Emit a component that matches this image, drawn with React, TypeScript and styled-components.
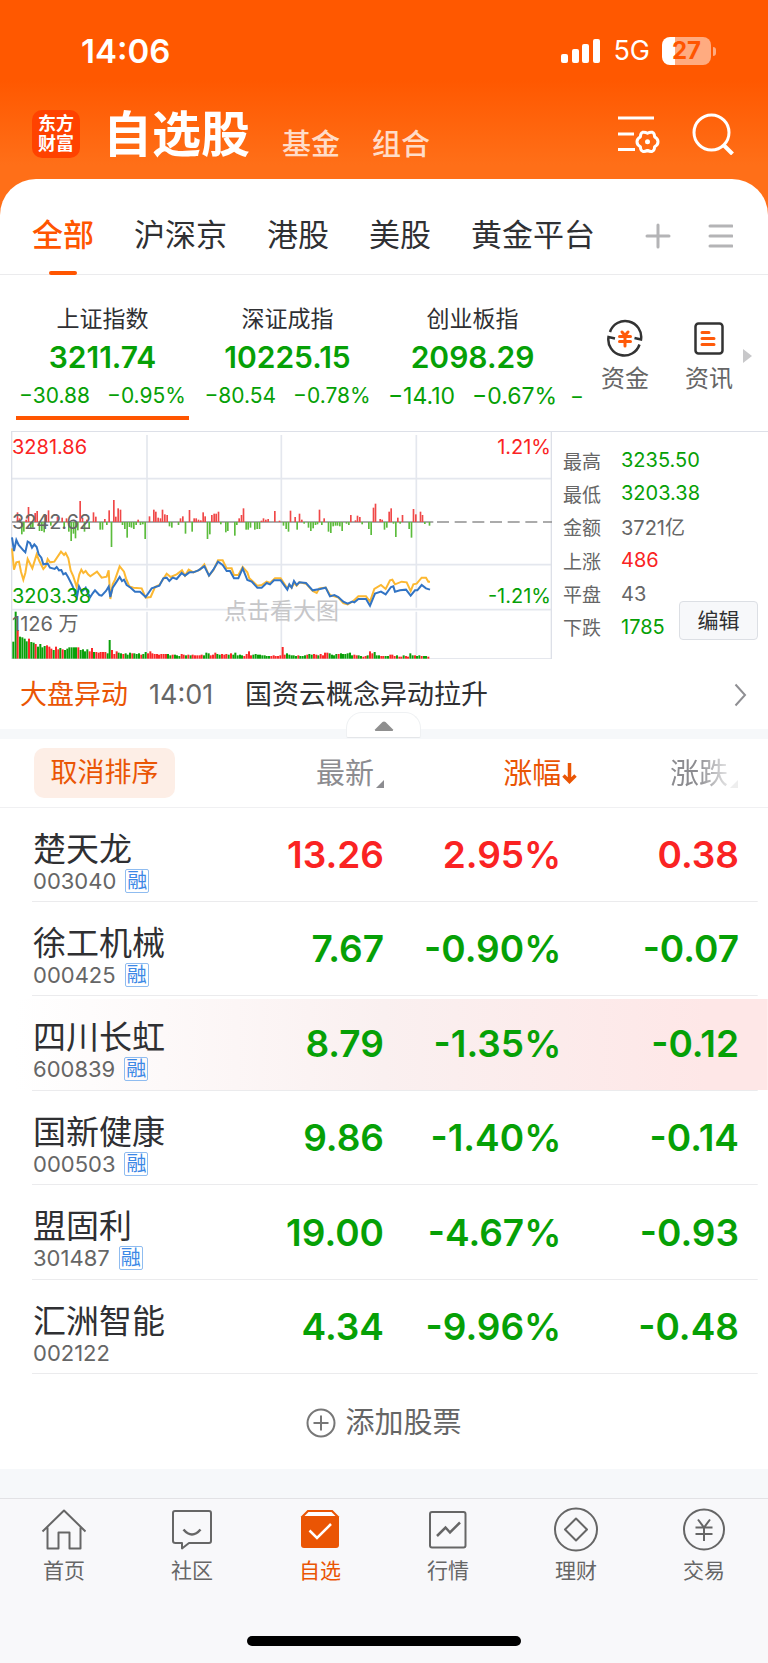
import React from "react";
import styled, { createGlobalStyle, css } from "styled-components";

const ORANGE = "#ff5500";
const DEEP = "#ea5504";
const GREEN = "#06a006";
const RED = "#fa2323";
const GREY = "#666666";
const INK = "#2f3033";
const LINE = "#ebebed";
const BAND = "#f6f8fa";

const Global = createGlobalStyle`
  *, *::before, *::after { box-sizing: border-box; }
  body {
    margin: 0;
    font-family: Inter, "Noto Sans CJK SC", sans-serif;
    color: ${INK};
    background: #f8f8fa;
  }
  button {
    font: inherit;
    color: inherit;
    background: none;
    border: 0;
    padding: 0;
    margin: 0;
    cursor: pointer;
  }
  a { color: inherit; text-decoration: none; }
  svg { display: block; flex: none; }
  h1, p, ul, dl, dd { margin: 0; padding: 0; }
  ul { list-style: none; }
`;

const Page = styled.div`
  min-height: 100vh;
  display: flex;
  flex-direction: column;
  background: linear-gradient(#ff5800 80px, #ff6f18 165px) top / 100% 240px no-repeat;
`;

/* ---------- status bar ---------- */

const StatusBar = styled.div`
  height: 102px;
  padding: 0 52px 0 81px;
  display: flex;
  align-items: center;
  justify-content: space-between;
  color: #fff;
`;

const Clock = styled.time`
  font-size: 33px;
  line-height: 40px;
  font-weight: 600;
`;

const StatusRight = styled.div`
  display: flex;
  align-items: center;
`;

const Network = styled.span`
  margin: 0 12px;
  font-size: 27px;
  line-height: 32px;
`;

const Battery = styled.span`
  width: 49px;
  height: 28px;
  border-radius: 8px;
  background: linear-gradient(90deg, #fff 13px, #ffab80 13px);
  color: ${ORANGE};
  font-size: 24px;
  line-height: 28px;
  font-weight: 700;
  text-align: center;
`;

const BatteryNub = styled.span`
  width: 3px;
  height: 9px;
  margin-left: 2px;
  border-radius: 0 3px 3px 0;
  background: #ffab80;
`;

/* ---------- title bar ---------- */

const TitleBar = styled.header`
  height: 77px;
  padding: 8px 34px 0 32px;
  display: flex;
  align-items: flex-start;
`;

const Logo = styled.span`
  width: 48px;
  height: 48px;
  padding: 4px 0;
  border-radius: 10px;
  background: #ff4200;
  color: #fff;
  font-size: 18px;
  line-height: 20px;
  font-weight: 700;
  text-align: center;
`;

const TitleTabs = styled.nav`
  flex: 1;
  height: 50px;
  margin-left: 23px;
  display: flex;
  align-items: flex-end;
  gap: 32px;
`;

const Title = styled.h1`
  font-size: 49px;
  line-height: 50px;
  font-weight: 600;
  color: #fff;
`;

const TitleTab = styled.button`
  font-size: 29px;
  line-height: 30px;
  font-weight: 500;
  color: #ffdcc8;
`;

const TitleActions = styled.div`
  display: flex;
  gap: 32px;
  height: 48px;
  align-items: center;
`;

/* ---------- card and group tabs ---------- */

const Card = styled.main`
  flex: 1;
  display: flex;
  flex-direction: column;
  background: #fff;
  border-radius: 36px 36px 0 0;
`;

const GroupTabs = styled.nav`
  height: 96px;
  padding: 0 35px 0 32px;
  display: flex;
  align-items: stretch;
  gap: 40px;
  border-bottom: 1px solid ${LINE};
`;

const GroupTab = styled.button<{ $active?: boolean }>`
  position: relative;
  padding-top: 17px;
  font-size: 31px;
  line-height: 40px;
  white-space: nowrap;
  ${(p) =>
    p.$active &&
    css`
      color: ${ORANGE};
      font-weight: 500;
      &::after {
        content: "";
        position: absolute;
        left: 50%;
        bottom: -1px;
        width: 28px;
        height: 4px;
        margin-left: -14px;
        border-radius: 2px;
        background: ${ORANGE};
      }
    `}
`;

const GroupTools = styled.div`
  margin-left: auto;
  padding-top: 18px;
  display: flex;
  align-items: center;
  gap: 36px;
`;

/* ---------- index strip ---------- */

const IndexStrip = styled.section`
  display: flex;
  height: 156px;
  padding-left: 10px;
`;

const IndexList = styled.ul`
  flex: 1;
  min-width: 0;
  display: flex;
  overflow: hidden;
`;

const IndexItem = styled.li<{ $active?: boolean }>`
  flex: 0 0 185px;
  height: 145px;
  padding-top: 30px;
  text-align: center;
  white-space: nowrap;
  background: ${(p) =>
    p.$active ? `linear-gradient(${ORANGE}, ${ORANGE}) center bottom / 173px 4px no-repeat` : "none"};
`;

const IndexName = styled.div`
  font-size: 23px;
  line-height: 28px;
`;

const IndexValue = styled.div`
  margin-top: 5px;
  font-size: 30px;
  line-height: 38px;
  font-weight: 600;
  color: ${GREEN};
`;

const IndexChange = styled.div<{ $large?: boolean }>`
  margin-top: 4px;
  display: flex;
  justify-content: center;
  gap: 17px;
  font-size: ${(p) => (p.$large ? 23 : 21)}px;
  line-height: 32px;
  color: ${GREEN};
`;

const NextChange = styled.li`
  flex: none;
  padding: 105px 0 0 5px;
  font-size: 21px;
  line-height: 32px;
  color: ${GREEN};
`;

const Shortcuts = styled.div`
  flex: none;
  padding: 44px 16px 0 16px;
  display: flex;
  align-items: flex-start;
  gap: 36px;
`;

const Shortcut = styled.a`
  display: flex;
  flex-direction: column;
  align-items: center;
  gap: 6px;
  font-size: 24px;
  line-height: 32px;
  color: ${GREY};
`;

const MoreArrow = styled.span`
  margin: 30px 0 0 -26px;
  border: 7px solid transparent;
  border-left: 9px solid #c8c8ca;
  border-right: 0;
`;

/* ---------- chart and statistics ---------- */

const Market = styled.section`
  margin-left: 11px;
  display: grid;
  grid-template-columns: 541fr 216fr;
  border-top: 1px solid #dde0e8;
`;

const ChartBox = styled.div`
  position: relative;
  height: 227px;
  & > svg { width: 100%; height: 100%; }
`;

const ChartLabel = styled.span<{ $top: number; $side?: "left" | "right"; $color?: string }>`
  position: absolute;
  top: ${(p) => p.$top}px;
  ${(p) => (p.$side === "right" ? "right: 1px;" : "left: 1px;")}
  font-size: 20px;
  line-height: 24px;
  color: ${(p) => p.$color || GREY};
`;

const Watermark = styled.span`
  position: absolute;
  left: 0;
  right: 0;
  top: 163px;
  text-align: center;
  font-size: 23px;
  line-height: 32px;
  color: #c6c6c8;
`;

const Stats = styled.div`
  position: relative;
  padding: 12px 0 0 11px;
`;

const StatList = styled.dl`
  height: 199px;
  display: flex;
  flex-direction: column;
  justify-content: space-between;
`;

const StatRow = styled.div`
  display: flex;
  align-items: center;
  height: 32px;
  font-size: 19px;
  color: ${GREY};
`;

const StatTerm = styled.dt`
  width: 58px;
`;

const StatValue = styled.dd<{ $color?: string }>`
  font-size: 20px;
  color: ${(p) => p.$color || GREY};
`;

const EditButton = styled.button`
  position: absolute;
  right: 10px;
  bottom: 19px;
  width: 79px;
  height: 39px;
  border: 1px solid #dcdfe4;
  border-radius: 4px;
  background: #f7f8fa;
  font-size: 21px;
  line-height: 32px;
`;

/* ---------- news line ---------- */

const News = styled.a`
  height: 70px;
  padding: 2px 21px 0 20px;
  display: flex;
  align-items: center;
  font-size: 27px;
  line-height: 40px;
`;

const NewsTag = styled.span`
  color: ${DEEP};
`;

const NewsTime = styled.time`
  width: 97px;
  padding-left: 21px;
  margin-right: 20px;
  color: ${GREY};
`;

const NewsText = styled.span`
  flex: 1;
`;

const Band = styled.div`
  position: relative;
  height: 10px;
  background: ${BAND};
`;

const Collapse = styled.button`
  position: absolute;
  left: 50%;
  bottom: 1px;
  width: 75px;
  height: 26px;
  margin-left: -38px;
  border: 1px solid #eff1f3;
  border-bottom-color: #e4e6e9;
  border-radius: 16px 16px 2px 2px;
  background: #fff;
  display: flex;
  align-items: center;
  justify-content: center;
  padding-top: 1px;
`;

/* ---------- stock table ---------- */

const Table = styled.table`
  width: 100%;
  border-collapse: collapse;
  table-layout: fixed;
`;

const Column = styled.col<{ $share: number }>`
  width: ${(p) => p.$share}%;
`;

const HeadRow = styled.tr`
  height: 68px;
  border-bottom: 1px solid #f0f0f2;
`;

const HeadCell = styled.th<{ $first?: boolean }>`
  padding: ${(p) => (p.$first ? "0 0 0 34px" : "2px 0 0")};
  text-align: ${(p) => (p.$first ? "left" : "right")};
  font-weight: 400;
`;

const CancelSort = styled.button`
  width: 141px;
  height: 50px;
  padding-top: 1px;
  border-radius: 10px;
  background: #fdeee6;
  color: ${DEEP};
  font-size: 27px;
  line-height: 40px;
`;

const SortButton = styled.button<{ $tone?: "active" | "fade"; $inset?: number }>`
  display: inline-flex;
  align-items: center;
  gap: ${(p) => (p.$tone === "active" ? 1 : 2)}px;
  margin-right: ${(p) => p.$inset || 0}px;
  font-size: 29px;
  line-height: 40px;
  color: ${(p) => (p.$tone === "active" ? DEEP : "#8c8c90")};
  ${(p) =>
    p.$tone === "fade" &&
    css`
      mask-image: linear-gradient(90deg, #000 40%, rgba(0, 0, 0, 0.15) 90%);
    `}
`;

const CornerMark = styled.span`
  align-self: flex-end;
  margin-bottom: 6px;
  border: 4px solid;
  border-top-color: transparent;
  border-left-color: transparent;
`;

const Row = styled.tr<{ $flash?: boolean }>`
  height: 94px;
  &:nth-child(odd) { height: 95px; }
  background:
    linear-gradient(${LINE}, ${LINE}) 32px 100% / calc(100% - 42px) 1px no-repeat
    ${(p) => p.$flash && ", linear-gradient(90deg, #fff 2%, #faf0f0 50%, #fee7e7 92%) 0 3px / 100% 91px no-repeat"};
`;

const NameCell = styled.th`
  padding: 0 0 0 33px;
  text-align: left;
  font-weight: 400;
  vertical-align: top;
`;

const StockName = styled.div`
  margin-top: 21px;
  font-size: 33px;
  line-height: 40px;
  white-space: nowrap;
`;

const StockMeta = styled.div`
  display: flex;
  align-items: center;
  gap: 9px;
  height: 24px;
  font-size: 22px;
  line-height: 24px;
  color: ${GREY};
`;

const Badge = styled.span`
  width: 24px;
  height: 24px;
  border: 1px solid #8fbcf0;
  border-radius: 2px;
  color: #3c88e6;
  font-size: 20px;
  line-height: 22px;
  text-align: center;
`;

const NumCell = styled.td<{ $up?: boolean; $inset?: number }>`
  padding: 0 ${(p) => p.$inset || 0}px 0 0;
  text-align: right;
  font-size: 37px;
  line-height: 48px;
  font-weight: 600;
  white-space: nowrap;
  color: ${(p) => (p.$up ? RED : GREEN)};
`;

const AddStock = styled.button`
  height: 95px;
  padding-top: 2px;
  display: flex;
  align-items: center;
  justify-content: center;
  gap: 9px;
  font-size: 29px;
  line-height: 40px;
  color: ${GREY};
`;

const Filler = styled.div`
  flex: 1;
  min-height: 29px;
  background: ${BAND};
`;

/* ---------- bottom navigation ---------- */

const Footer = styled.footer`
  height: 165px;
  padding-bottom: 17px;
  display: flex;
  flex-direction: column;
  justify-content: space-between;
  align-items: center;
  border-top: 1px solid #e2e2e5;
  background: #f8f8fa;
`;

const BottomNav = styled.nav`
  width: 100%;
  display: grid;
  grid-template-columns: repeat(6, 1fr);
`;

const NavLink = styled.a<{ $active?: boolean }>`
  padding-top: 8px;
  display: flex;
  flex-direction: column;
  align-items: center;
  gap: 3px;
  font-size: 21px;
  line-height: 30px;
  color: ${(p) => (p.$active ? DEEP : GREY)};
`;

const HomeBar = styled.div`
  width: 274px;
  height: 10px;
  border-radius: 5px;
  background: #000;
`;

/* ---------- data ---------- */

const indices = [
  { name: "上证指数", value: "3211.74", change: "−30.88", pct: "−0.95%" },
  { name: "深证成指", value: "10225.15", change: "−80.54", pct: "−0.78%" },
  { name: "创业板指", value: "2098.29", change: "−14.10", pct: "−0.67%", large: true },
];

const stats = [
  { term: "最高", value: "3235.50", color: GREEN },
  { term: "最低", value: "3203.38", color: GREEN },
  { term: "金额", value: "3721亿" },
  { term: "上涨", value: "486", color: RED },
  { term: "平盘", value: "43" },
  { term: "下跌", value: "1785", color: GREEN },
];

const stocks = [
  { name: "楚天龙", code: "003040", price: "13.26", pct: "2.95%", diff: "0.38", up: true, margin: true },
  { name: "徐工机械", code: "000425", price: "7.67", pct: "-0.90%", diff: "-0.07", margin: true },
  { name: "四川长虹", code: "600839", price: "8.79", pct: "-1.35%", diff: "-0.12", margin: true, flash: true },
  { name: "国新健康", code: "000503", price: "9.86", pct: "-1.40%", diff: "-0.14", margin: true },
  { name: "盟固利", code: "301487", price: "19.00", pct: "-4.67%", diff: "-0.93", margin: true },
  { name: "汇洲智能", code: "002122", price: "4.34", pct: "-9.96%", diff: "-0.48" },
];

/* Chart space: three units per pixel, origin shifted by (33, 21). */
const priceLine =
  "36,337 42,378 49,345 56,360 63,368 70,376 76,382 83,350 90,354 96,368 103,358 110,366 116,388 124,398 130,418 143,416 150,428 164,432 170,426 177,436 184,435 190,448 197,444 204,456 217,482 231,516 237,484 244,498 250,496 257,488 264,506 271,516 278,505 285,496 298,510 305,512 318,498 326,485 331,516 338,488 350,470 359,456 366,468 372,464 380,480 392,488 405,500 420,500 437,516 455,490 478,482 490,460 500,458 508,468 518,458 530,462 545,444 555,452 568,442 580,442 595,436 613,424 627,452 640,434 654,410 668,420 680,438 690,438 702,460 715,460 728,430 742,465 755,470 772,488 785,488 800,474 810,478 822,466 842,466 862,494 868,478 875,488 882,468 890,480 898,472 918,474 938,496 960,492 977,488 990,514 1003,510 1015,516 1030,530 1043,536 1057,530 1063,532 1075,522 1098,522 1110,542 1125,506 1143,500 1157,508 1173,486 1180,484 1185,500 1200,496 1218,494 1232,512 1245,496 1252,496 1265,480 1278,490 1290,494";
const averageLine =
  "36,370 42,434 49,412 57,410 63,440 70,464 76,444 83,402 97,430 110,388 118,408 130,432 137,424 143,402 150,412 163,410 183,380 192,390 197,384 205,400 212,436 220,454 230,486 238,448 244,434 250,444 257,438 264,448 271,454 291,440 305,458 320,455 326,436 331,522 338,478 345,464 359,424 372,440 378,460 388,484 400,488 425,490 437,518 452,516 465,486 478,480 500,446 512,456 530,448 546,436 555,452 566,434 580,442 600,434 613,418 627,452 640,436 654,406 668,406 680,430 695,430 702,450 715,450 728,426 742,442 748,460 772,482 785,480 800,470 810,474 825,460 842,460 862,490 868,480 875,488 882,474 890,482 898,472 918,476 938,498 950,504 958,490 977,488 990,510 1003,514 1015,518 1030,534 1043,538 1060,528 1075,514 1098,514 1110,530 1123,492 1143,480 1157,492 1170,466 1177,464 1185,478 1205,470 1220,472 1232,498 1240,478 1250,476 1265,458 1278,458 1285,470 1290,470";

const momentum: [number, number][] = [
  [52, 262], [58, 280], [65, 328], [71, 320], [78, 284], [85, 246], [92, 312], [98, 308], [105, 264], [111, 258],
  [118, 318], [125, 318], [132, 322], [138, 270], [145, 256], [152, 302], [172, 276], [186, 278], [192, 310],
  [199, 280], [206, 320], [213, 348], [220, 326], [226, 340], [233, 316], [240, 228], [247, 278], [253, 320],
  [260, 284], [267, 312], [280, 262], [287, 275], [300, 314], [307, 314], [314, 282], [320, 300], [327, 256],
  [334, 366], [341, 225], [347, 275], [354, 250], [361, 254], [367, 300], [374, 312], [381, 338], [388, 306],
  [394, 308], [401, 312], [408, 300], [414, 284], [421, 300], [428, 298], [435, 342], [448, 274], [461, 254],
  [467, 260], [474, 278], [481, 280], [487, 254], [494, 268], [501, 270], [508, 304], [515, 308], [535, 300],
  [541, 280], [548, 274], [556, 326], [568, 255], [576, 320], [582, 280], [588, 280], [595, 284], [602, 286],
  [609, 262], [615, 274], [622, 342], [629, 328], [635, 270], [642, 266], [648, 266], [655, 260], [662, 298],
  [677, 322], [683, 318], [704, 332], [710, 300], [717, 280], [724, 270], [730, 250], [738, 314], [744, 314],
  [751, 308], [764, 314], [771, 312], [778, 312], [784, 287], [790, 280], [797, 284], [804, 282], [824, 258],
  [838, 287], [850, 302], [858, 312], [865, 320], [871, 257], [885, 276], [891, 314], [898, 266], [905, 284],
  [912, 296], [925, 308], [932, 318], [939, 310], [946, 300], [952, 298], [958, 254], [965, 300], [972, 280],
  [985, 320], [992, 324], [999, 304], [1006, 302], [1012, 302], [1019, 304], [1026, 318], [1039, 296],
  [1046, 300], [1052, 270], [1066, 286], [1072, 272], [1079, 276], [1086, 298], [1106, 312], [1113, 330],
  [1120, 248], [1126, 236], [1140, 282], [1146, 284], [1153, 314], [1160, 308], [1167, 260], [1173, 250],
  [1180, 296], [1187, 336], [1193, 278], [1200, 296], [1207, 270], [1227, 312], [1234, 338], [1240, 252],
  [1247, 268], [1261, 260], [1267, 270], [1274, 297], [1288, 302],
];

const volume = [
  51, 141, 86, 66, 64, 60, 52, 60, 50, 48, 44, 36, 44, 34, 38, 40, 36, 30, 26, 36, 28, 32, 28, 26, 30, 34, 34, 34, 34,
  34, 26, 28, 22, 28, 22, 32, 20, 20, 18, 20, 20, 20, 16, 56, 26, 14, 22, 18, 16, 14, 16, 12, 18, 16, 16, 14, 16, 12,
  14, 20, 16, 22, 16, 14, 14, 12, 14, 14, 14, 14, 10, 12, 12, 10, 8, 14, 12, 10, 12, 10, 12, 10, 10, 10, 12, 10, 18,
  16, 10, 12, 18, 14, 12, 14, 12, 14, 12, 16, 12, 18, 10, 12, 10, 8, 14, 22, 10, 12, 14, 12, 12, 10, 10, 8, 8, 8, 10,
  8, 8, 10, 35, 12, 16, 12, 10, 10, 8, 10, 8, 8, 10, 12, 14, 12, 14, 12, 10, 14, 10, 18, 18, 16, 12, 10, 14, 14, 16,
  14, 14, 16, 18, 10, 12, 10, 10, 8, 6, 8, 10, 22, 16, 20, 10, 10, 8, 8, 8, 8, 12, 12, 8, 10, 6, 6, 10, 8, 6, 16, 10,
  10, 8, 10, 8, 8, 8, 6,
];
const volumeColors =
  "ggrggggrggrggggrrrgrrgrggggggrggggrrgrrrrrggrrrggrgggrggg" +
  "rggrrrrrrrrrggrgggrrgrgrrrrrgggrrrggrrrgrgggggrrrrggggggggrrrrrrrggg" +
  "ggrgggrggrrgrrrrggggrggggggrrggrrgrrgggrrggrrrgrrgrrggrggrggrggr";

const Chart = () => (
  <svg viewBox="0 0 1623 681" preserveAspectRatio="none" aria-hidden="true">
    <g transform="translate(-33 -21)">
      <g stroke="#e4e7ee" strokeWidth="5" fill="none">
        <path d="M33 161H1656M33 419H1656M33 554H1656" />
        <path d="M441 30V548M441 560V700M844 30V548M844 560V700M1249 30V548M1249 560V700" />
      </g>
      <path d="M35 21V702H1654V21" fill="none" stroke="#dde0e8" strokeWidth="4" />
      <path d="M36 291H1300" stroke="#909090" strokeWidth="4" />
      <path d="M1311 291H1656" stroke="#909090" strokeWidth="5" strokeDasharray="36 17" />
      {momentum.map(([x, y], i) => (
        <rect key={i} x={x - 2} width="5" y={Math.min(y, 291)} height={Math.abs(y - 291)} fill={y < 291 ? "#f04848" : "#5cbc3c"} />
      ))}
      {volume.map((h, i) => (
        <rect
          key={i}
          x={Math.round(37 + i * 6.73)}
          y={701 - h}
          width="6"
          height={h}
          fill={volumeColors[i % volumeColors.length] === "g" ? "#0aa00a" : "#fa2828"}
        />
      ))}
      <polyline points={averageLine} fill="none" stroke="#fcb832" strokeWidth="6" />
      <polyline points={priceLine} fill="none" stroke="#3274c4" strokeWidth="6" />
    </g>
  </svg>
);

/* ---------- icons ---------- */

const SignalIcon = () => (
  <svg width="40" height="24" viewBox="0 0 40 24" fill="#fff">
    <rect x="0" y="15" width="7" height="9" rx="2" />
    <rect x="11" y="10" width="7" height="14" rx="2" />
    <rect x="21" y="5" width="7" height="19" rx="2" />
    <rect x="32" y="0" width="7" height="24" rx="2" />
  </svg>
);

const FilterIcon = () => (
  <svg width="42" height="42" viewBox="0 0 42 42" fill="none" stroke="#fff" strokeWidth="3">
    <path d="M0 5H36M0 21H16M0 36.500H17" />
    <path
      d="M24.500 19.300Q27 18.800 29.500 20.200Q32 18.800 34.500 19.300Q36.500 20 36.600 23.800Q40 25.500 40 28.800Q40 32 36.600 33.800Q36.500 37.500 34.500 38.200Q32 38.800 29.500 37.400Q27 38.800 24.500 38.200Q22.500 37.500 22.400 33.800Q19 32 19 28.800Q19 25.500 22.400 23.800Q22.500 20 24.500 19.300Z"
      strokeLinejoin="round"
    />
    <circle cx="29.500" cy="28.800" r="2.500" fill="#fff" stroke="none" />
  </svg>
);

const SearchIcon = () => (
  <svg width="42" height="42" viewBox="0 0 42 42" fill="none" stroke="#fff" strokeWidth="3">
    <circle cx="19.500" cy="19.500" r="17.500" />
    <path d="M31.500 32L40.500 41" strokeWidth="4" />
  </svg>
);

const PlusIcon = () => (
  <svg width="26" height="26" viewBox="0 0 26 26" stroke="#b4b4b6" strokeWidth="3" strokeLinecap="round">
    <path d="M2 13H24M13 2V24" />
  </svg>
);

const MenuIcon = () => (
  <svg width="26" height="26" viewBox="0 0 26 26" stroke="#b4b4b6" strokeWidth="3" strokeLinecap="round">
    <path d="M3 3H25M3 13H25M3 23H25" />
  </svg>
);

const FundsIcon = () => (
  <svg width="38" height="38" viewBox="0 0 38 38" fill="none" stroke="#333" strokeWidth="2.500">
    <path d="M4 13A16 16 0 0 1 35 20.500L28.500 19" />
    <path d="M33.500 25.500A16 16 0 0 1 2.500 18L9 19.500" />
    <g stroke="#ff5a0a" strokeWidth="3" strokeLinecap="round">
      <path d="M16 13L19 16.500L22 13M13.500 17.500H24.500M13.500 22.500H24.500M19 17V27" />
    </g>
  </svg>
);

const InfoIcon = () => (
  <svg width="38" height="38" viewBox="0 0 38 38" fill="none" stroke="#333" strokeWidth="2.500">
    <rect x="5.500" y="4.500" width="27" height="30" rx="3" />
    <path d="M12 13.500H19M12 19.500H24M12 25.500H24" stroke="#ff5a0a" strokeWidth="3" strokeLinecap="round" />
  </svg>
);

const ChevronIcon = () => (
  <svg width="13" height="24" viewBox="0 0 13 24" fill="none" stroke="#8f8f93" strokeWidth="2">
    <path d="M1.500 1.500L11 12L1.500 22.500" />
  </svg>
);

const TriangleIcon = () => (
  <svg width="20" height="10" viewBox="0 0 20 10" fill="#8f8f8f">
    <path d="M8.500 1Q10 0 11.500 1L19 8.500Q19.500 10 18 10H2Q0.500 10 1 8.500Z" />
  </svg>
);

const ArrowDownIcon = () => (
  <svg width="15" height="24" viewBox="0 0 15 24" fill="none" stroke={DEEP} strokeWidth="3.500">
    <path d="M7.500 1V20M1.500 13.500L7.500 19.500L13.500 13.500" />
  </svg>
);

const AddIcon = () => (
  <svg width="30" height="30" viewBox="0 0 30 30" fill="none" stroke="#777" strokeWidth="2">
    <circle cx="15" cy="15" r="13.500" />
    <path d="M7.500 15H22.500M15 7.500V22.500" />
  </svg>
);

const navIcon = { width: 46, height: 46, viewBox: "0 0 46 46", fill: "none", stroke: "#666", strokeWidth: 2 } as const;

const HomeIcon = () => (
  <svg {...navIcon}>
    <path d="M1.500 24.500L23 3.500L44.500 24.500M6.500 20.500V41.500H17.500V25.500H28.500V41.500H39.500V20.500" strokeLinejoin="round" />
  </svg>
);

const ChatIcon = () => (
  <svg {...navIcon}>
    <path d="M6 4H40Q42 4 42 6V34Q42 36 40 36H20L13 41.500V36H6.500Q4 36 4 34V6Q4 4 6 4Z" strokeLinejoin="round" />
    <path d="M14.500 22.500Q23 32.500 31.500 22.500" strokeWidth="2.500" />
  </svg>
);

const PickIcon = () => (
  <svg {...navIcon} stroke="none">
    <path d="M10.500 3H35.500L42 9.500V38Q42 41 39 41H7Q4 41 4 38V9.500Z" fill={DEEP} />
    <path d="M11.500 5H34.500L38.500 9H7.500Z" fill="#fff" />
    <path d="M12.500 23.500L20 31L34 17" stroke="#fff" strokeWidth="2.500" />
  </svg>
);

const TrendIcon = () => (
  <svg {...navIcon}>
    <rect x="5" y="5" width="35.500" height="35.500" rx="2" />
    <path d="M12 29L20.500 20.500L25 25.500L35 15.500" strokeWidth="2.500" />
  </svg>
);

const WealthIcon = () => (
  <svg {...navIcon}>
    <circle cx="23" cy="22.500" r="21" />
    <path d="M23 11.500L34 22.500L23 33.500L12 22.500Z" strokeLinejoin="round" />
  </svg>
);

const TradeIcon = () => (
  <svg {...navIcon}>
    <circle cx="23" cy="22.500" r="20" />
    <path d="M17 12.500L23 20.500L29 12.500M14.500 20.500H31.500M14.500 27H31.500M23 20.500V34" />
  </svg>
);

const navItems = [
  { label: "首页", Icon: HomeIcon },
  { label: "社区", Icon: ChatIcon },
  { label: "自选", Icon: PickIcon, active: true },
  { label: "行情", Icon: TrendIcon },
  { label: "理财", Icon: WealthIcon },
  { label: "交易", Icon: TradeIcon },
];

const groups = ["全部", "沪深京", "港股", "美股", "黄金平台"];

export default function App() {
  return (
    <>
      <Global />
      <Page>
        <StatusBar>
          <Clock>14:06</Clock>
          <StatusRight>
            <SignalIcon />
            <Network>5G</Network>
            <Battery>27</Battery>
            <BatteryNub />
          </StatusRight>
        </StatusBar>

        <TitleBar>
          <Logo>
            东方
            <br />
            财富
          </Logo>
          <TitleTabs>
            <Title>自选股</Title>
            <TitleTab>基金</TitleTab>
            <TitleTab>组合</TitleTab>
          </TitleTabs>
          <TitleActions>
            <button aria-label="设置">
              <FilterIcon />
            </button>
            <button aria-label="搜索">
              <SearchIcon />
            </button>
          </TitleActions>
        </TitleBar>

        <Card>
          <GroupTabs>
            {groups.map((g, i) => (
              <GroupTab key={g} $active={i === 0}>
                {g}
              </GroupTab>
            ))}
            <GroupTools>
              <button aria-label="添加分组">
                <PlusIcon />
              </button>
              <button aria-label="分组列表">
                <MenuIcon />
              </button>
            </GroupTools>
          </GroupTabs>

          <IndexStrip>
            <IndexList>
              {indices.map((x, i) => (
                <IndexItem key={x.name} $active={i === 0}>
                  <IndexName>{x.name}</IndexName>
                  <IndexValue>{x.value}</IndexValue>
                  <IndexChange $large={x.large}>
                    <span>{x.change}</span>
                    <span>{x.pct}</span>
                  </IndexChange>
                </IndexItem>
              ))}
              <NextChange>−</NextChange>
            </IndexList>
            <Shortcuts>
              <Shortcut href="#funds">
                <FundsIcon />
                资金
              </Shortcut>
              <Shortcut href="#news">
                <InfoIcon />
                资讯
              </Shortcut>
              <MoreArrow />
            </Shortcuts>
          </IndexStrip>

          <Market>
            <ChartBox>
              <Chart />
              <Watermark>点击看大图</Watermark>
              <ChartLabel $top={3} $color={RED}>3281.86</ChartLabel>
              <ChartLabel $top={78}>3242.62</ChartLabel>
              <ChartLabel $top={152} $color={GREEN}>3203.38</ChartLabel>
              <ChartLabel $top={180}>1126 万</ChartLabel>
              <ChartLabel $top={3} $side="right" $color={RED}>1.21%</ChartLabel>
              <ChartLabel $top={152} $side="right" $color={GREEN}>-1.21%</ChartLabel>
            </ChartBox>
            <Stats>
              <StatList>
                {stats.map((s) => (
                  <StatRow key={s.term}>
                    <StatTerm>{s.term}</StatTerm>
                    <StatValue $color={s.color}>{s.value}</StatValue>
                  </StatRow>
                ))}
              </StatList>
              <EditButton>编辑</EditButton>
            </Stats>
          </Market>

          <News href="#alert">
            <NewsTag>大盘异动</NewsTag>
            <NewsTime>14:01</NewsTime>
            <NewsText>国资云概念异动拉升</NewsText>
            <ChevronIcon />
          </News>

          <Band>
            <Collapse aria-label="收起">
              <TriangleIcon />
            </Collapse>
          </Band>

          <Table>
            <colgroup>
              <Column $share={27} />
              <Column $share={23} />
              <Column $share={24} />
              <Column $share={26} />
            </colgroup>
            <thead>
              <HeadRow>
                <HeadCell $first>
                  <CancelSort>取消排序</CancelSort>
                </HeadCell>
                <HeadCell>
                  <SortButton>
                    最新
                    <CornerMark />
                  </SortButton>
                </HeadCell>
                <HeadCell>
                  <SortButton $tone="active" $inset={-9}>
                    涨幅
                    <ArrowDownIcon />
                  </SortButton>
                </HeadCell>
                <HeadCell>
                  <SortButton $tone="fade" $inset={30}>
                    涨跌
                    <CornerMark />
                  </SortButton>
                </HeadCell>
              </HeadRow>
            </thead>
            <tbody>
              {stocks.map((s) => (
                <Row key={s.code} $flash={s.flash}>
                  <NameCell scope="row">
                    <StockName>{s.name}</StockName>
                    <StockMeta>
                      {s.code}
                      {s.margin && <Badge>融</Badge>}
                    </StockMeta>
                  </NameCell>
                  <NumCell $up={s.up}>{s.price}</NumCell>
                  <NumCell $up={s.up} $inset={7}>
                    {s.pct}
                  </NumCell>
                  <NumCell $up={s.up} $inset={29}>
                    {s.diff}
                  </NumCell>
                </Row>
              ))}
            </tbody>
          </Table>

          <AddStock>
            <AddIcon />
            添加股票
          </AddStock>
          <Filler />
        </Card>

        <Footer>
          <BottomNav>
            {navItems.map(({ label, Icon, active }) => (
              <NavLink key={label} href="#" $active={active}>
                <Icon />
                {label}
              </NavLink>
            ))}
          </BottomNav>
          <HomeBar />
        </Footer>
      </Page>
    </>
  );
}
